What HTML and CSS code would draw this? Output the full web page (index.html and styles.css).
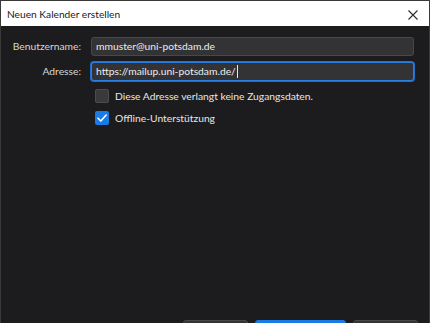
FILE: index.html
```html
<!DOCTYPE html>
<html lang="de">
<head>
<meta charset="utf-8">
<link rel="stylesheet" href="styles.css">
</head>
<body>
<div class="window">
  <div class="titlebar">
    <span class="title">Neuen Kalender erstellen</span>
    <span class="close">
      <svg width="10" height="10" viewBox="0 0 10 10"><path d="M0.5 0.5 L9.5 9.5 M9.5 0.5 L0.5 9.5" stroke="#2b2b2b" stroke-width="1.1" fill="none"/></svg>
    </span>
  </div>
  <div class="content">
    <div class="form">
      <label class="label">Benutzername:</label>
      <div class="field">mmuster@uni-potsdam.de</div>
      <label class="label">Adresse:</label>
      <div class="field focused">https://mailup.uni-potsdam.de/<span class="caret"></span></div>
    </div>
    <div class="checks">
      <div class="check"><span class="box"></span><span class="ctext">Diese Adresse verlangt keine Zugangsdaten.</span></div>
      <div class="check"><span class="box on"><svg width="14" height="14" viewBox="0 0 14 14"><path d="M3 7.2 L5.8 10 L11.2 4" stroke="#fff" stroke-width="1.6" fill="none" stroke-linecap="round" stroke-linejoin="round"/></svg></span><span class="ctext">Offline-Unterstützung</span></div>
    </div>
    <div class="spacer"></div>
    <div class="footer">
      <span class="btn"></span>
      <span class="btn primary"></span>
      <span class="btn"></span>
    </div>
  </div>
</div>
</body>
</html>
```
FILE: styles.css
```css
html, body {
  margin: 0;
  padding: 0;
  width: 430px;
  height: 323px;
  overflow: hidden;
  background: #3a3a3a;
}
.window {
  width: 428px;
  height: 322px;
  margin-top: 1px;
  margin-left: 1px;
  display: flex;
  flex-direction: column;
  font-family: "Lato", sans-serif;
  font-size: 10.3px;
}
.titlebar {
  height: 25px;
  background: #ffffff;
  display: flex;
  align-items: center;
  justify-content: space-between;
  padding: 0 10px 0 6px;
  color: #1a1a1a;
}
.title {
  font-size: 10.2px;
}
.close {
  display: flex;
  width: 10px;
  height: 10px;
  margin-top: 2px;
  margin-right: 1px;
}
.content {
  flex: 1;
  background: #1c1c1e;
  display: flex;
  flex-direction: column;
  padding-top: 11px;
}
.form {
  display: grid;
  grid-template-columns: 80px 1fr;
  column-gap: 10px;
  row-gap: 6px;
  padding-right: 15px;
}
.label {
  text-align: right;
  color: #d6d6d6;
  line-height: 19px;
}
.field {
  height: 17px;
  line-height: 17px;
  background: #333336;
  border: 1px solid #48484b;
  border-radius: 3px;
  color: #ececec;
  padding: 0 4px;
  white-space: nowrap;
  display: flex;
  align-items: center;
}
.field.focused {
  border: 1px solid #2b7fe3;
  box-shadow: 0 0 0 1px #1f6fd0;
  height: 17px;
}
.caret {
  display: inline-block;
  width: 1px;
  height: 13px;
  background: #e8e8e8;
  margin-left: 1px;
}
.checks {
  display: flex;
  flex-direction: column;
  gap: 8px;
  padding-left: 94px;
  padding-top: 8px;
}
.check {
  display: flex;
  align-items: center;
  gap: 6px;
  height: 14px;
  color: #e6e6e6;
}
.box {
  width: 12px;
  height: 12px;
  border: 1px solid #4c4c50;
  background: #3a3a3d;
  border-radius: 2px;
  display: flex;
  align-items: center;
  justify-content: center;
}
.box.on {
  width: 14px;
  height: 14px;
  border: none;
  background: #1a7ae6;
}
.spacer {
  flex: 1;
}
.footer {
  height: 3px;
  display: flex;
  justify-content: flex-end;
  align-items: flex-start;
  gap: 7px;
  padding-right: 11px;
}
.btn {
  flex: none;
  width: 63px;
  height: 24px;
  background: #333336;
  border: 1px solid #48484b;
  border-radius: 3px;
}
.btn.primary {
  width: 89px;
  border-color: #1a7ae6;
  background: #1a7ae6;
}
```
